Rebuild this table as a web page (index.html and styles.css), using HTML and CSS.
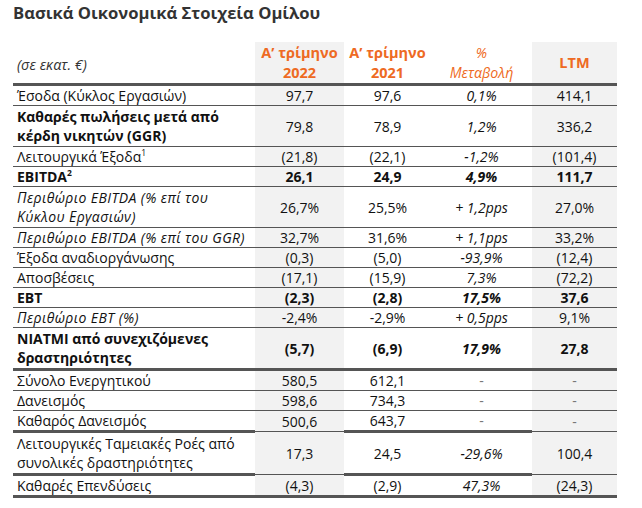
FILE: index.html
```html
<!DOCTYPE html>
<html lang="el">
<head>
<meta charset="utf-8">
<link rel="stylesheet" href="styles.css">
</head>
<body>
<div class="page">
  <h1 class="title">Βασικά Οικονομικά Στοιχεία Ομίλου</h1>
  <table class="fin">
    <colgroup>
      <col class="c-label"><col class="c-q22"><col class="c-q21"><col class="c-chg"><col class="c-ltm">
    </colgroup>
    <thead>
      <tr class="head">
        <th class="lbl unit">(σε εκατ. €)</th>
        <th class="gray hd">Α’ τρίμηνο<br>2022</th>
        <th class="hd">Α’ τρίμηνο<br>2021</th>
        <th class="hd-chg">%<br>Μεταβολή</th>
        <th class="gray hd">LTM</th>
      </tr>
    </thead>
    <tbody>
      <tr class="r1">
        <td class="lbl">Έσοδα (Κύκλος Εργασιών)</td><td class="gray">97,7</td><td>97,6</td><td class="it">0,1%</td><td class="gray">414,1</td>
      </tr>
      <tr class="r2">
        <td class="lbl bold">Καθαρές πωλήσεις μετά από κέρδη νικητών (GGR)</td><td class="gray">79,8</td><td>78,9</td><td class="it">1,2%</td><td class="gray">336,2</td>
      </tr>
      <tr class="r1">
        <td class="lbl">Λειτουργικά Έξοδα<sup class="sup">1</sup></td><td class="gray">(21,8)</td><td>(22,1)</td><td class="it">-1,2%</td><td class="gray">(101,4)</td>
      </tr>
      <tr class="r1 b">
        <td class="lbl">EBITDA<sup class="sup">2</sup></td><td class="gray">26,1</td><td>24,9</td><td class="it">4,9%</td><td class="gray">111,7</td>
      </tr>
      <tr class="r2">
        <td class="lbl it">Περιθώριο EBITDA (% επί του Κύκλου Εργασιών)</td><td class="gray">26,7%</td><td>25,5%</td><td class="it">+ 1,2pps</td><td class="gray">27,0%</td>
      </tr>
      <tr class="r1">
        <td class="lbl it">Περιθώριο EBITDA (% επί του GGR)</td><td class="gray">32,7%</td><td>31,6%</td><td class="it">+ 1,1pps</td><td class="gray">33,2%</td>
      </tr>
      <tr class="r1">
        <td class="lbl">Έξοδα αναδιοργάνωσης</td><td class="gray">(0,3)</td><td>(5,0)</td><td class="it">-93,9%</td><td class="gray">(12,4)</td>
      </tr>
      <tr class="r1">
        <td class="lbl">Αποσβέσεις</td><td class="gray">(17,1)</td><td>(15,9)</td><td class="it">7,3%</td><td class="gray">(72,2)</td>
      </tr>
      <tr class="r1 b">
        <td class="lbl">EBT</td><td class="gray">(2,3)</td><td>(2,8)</td><td class="it">17,5%</td><td class="gray">37,6</td>
      </tr>
      <tr class="r1">
        <td class="lbl it">Περιθώριο EBT (%)</td><td class="gray">-2,4%</td><td>-2,9%</td><td class="it">+ 0,5pps</td><td class="gray">9,1%</td>
      </tr>
      <tr class="r2 b thickb">
        <td class="lbl">ΝΙΑΤΜΙ από συνεχιζόμενες δραστηριότητες</td><td class="gray">(5,7)</td><td>(6,9)</td><td class="it">17,9%</td><td class="gray">27,8</td>
      </tr>
      <tr class="r1">
        <td class="lbl">Σύνολο Ενεργητικού</td><td class="gray">580,5</td><td>612,1</td><td class="dash">-</td><td class="gray dash">-</td>
      </tr>
      <tr class="r1">
        <td class="lbl">Δανεισμός</td><td class="gray">598,6</td><td>734,3</td><td class="dash">-</td><td class="gray dash">-</td>
      </tr>
      <tr class="r1 mixb">
        <td class="lbl">Καθαρός Δανεισμός</td><td class="gray">500,6</td><td>643,7</td><td class="dash">-</td><td class="gray dash">-</td>
      </tr>
      <tr class="r2 mixb">
        <td class="lbl">Λειτουργικές Ταμειακές Ροές από συνολικές δραστηριότητες</td><td class="gray">17,3</td><td>24,5</td><td class="it">-29,6%</td><td class="gray">100,4</td>
      </tr>
      <tr class="r1 thickb">
        <td class="lbl">Καθαρές Επενδύσεις</td><td class="gray">(4,3)</td><td>(2,9)</td><td class="it">47,3%</td><td class="gray">(24,3)</td>
      </tr>
    </tbody>
  </table>
</div>
</body>
</html>
```

FILE: styles.css
```css
html, body {
  margin: 0;
  padding: 0;
  background: #ffffff;
}

.page {
  padding: 1px 0 0 13px;
  font-family: "Open Sans", "Noto Sans", sans-serif;
  color: #111111;
}

.title {
  margin: 0 0 12px 0;
  font-size: 16.6px;
  font-weight: 700;
  color: #333333;
  line-height: 24px;
  height: 29px;
}

.fin {
  border-collapse: collapse;
  table-layout: fixed;
  width: 604px;
  font-size: 14px;
}

.c-label { width: 242px; }
.c-q22 { width: 89px; }
.c-q21 { width: 87px; }
.c-chg { width: 101px; }
.c-ltm { width: 85px; }

.fin th,
.fin td {
  padding: 0 4px;
  text-align: center;
  vertical-align: middle;
  border-bottom: 1px solid #555555;
  line-height: 19px;
}

.fin .lbl {
  text-align: left;
}

.head th {
  height: 37px;
  border-bottom: 3px solid #555555;
  line-height: 20px;
  font-weight: 700;
  color: #ee6a23;
  font-size: 14.5px;
}

.head .unit {
  font-weight: 400;
  font-style: italic;
  color: #333333;
  font-size: 14.4px;
  padding-top: 4px;
}

.head .hd-chg {
  font-weight: 400;
  font-style: italic;
  color: #ee6a23;
  font-size: 14.2px;
}

.gray {
  background: #f2f2f2;
}

.r1 td { height: 19px; }
.r2 td { height: 40px; }

.it { font-style: italic; }

.fin .lbl.it {
  letter-spacing: 0.4px;
}

.b td,
.fin .bold { font-weight: 700; }

.sup {
  font-size: 8.5px;
  vertical-align: 6px;
  line-height: 0;
}

.thickb td {
  border-bottom: 3px solid #555555;
}

.mixb td {
  border-bottom: 3px solid #555555;
}

.mixb td.gray {
  border-bottom: 1px solid #555555;
}

.dash {
  color: #777777;
}
```
